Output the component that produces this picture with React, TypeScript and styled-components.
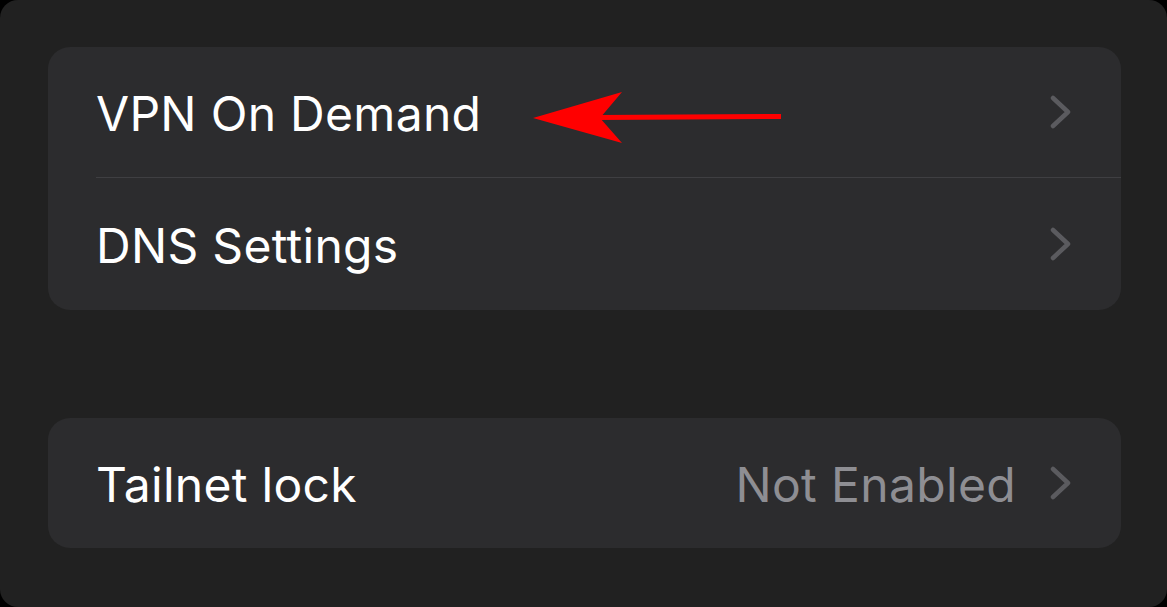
import React from "react";
import styled, { createGlobalStyle } from "styled-components";

const Global = createGlobalStyle`
  html, body { margin: 0; padding: 0; background: #000; }
  body { font-family: Inter, "Noto Sans", "Liberation Sans", sans-serif; }
`;

const Page = styled.div`
  width: 1167px;
  height: 607px;
  background: #000;
`;

const Panel = styled.div`
  box-sizing: border-box;
  width: 100%;
  height: 100%;
  background: #212121;
  border-radius: 18px;
  padding: 47px 46px 0 48px;
  display: flex;
  flex-direction: column;
  gap: 108px;
`;

const Card = styled.div`
  background: #2c2c2e;
  border-radius: 22px;
  overflow: hidden;
`;

const Row = styled.div<{ $h: number }>`
  position: relative;
  padding-left: 48px;
  height: ${(p) => p.$h}px;
  display: flex;
`;

const RowInner = styled.div<{ $sep?: boolean }>`
  flex: 1;
  display: flex;
  align-items: center;
  padding-right: 49px;
  border-bottom: ${(p) => (p.$sep ? "1px solid #3f3f42" : "none")};
`;

const Label = styled.span`
  flex: 1;
  color: #ffffff;
  font-size: 48px;
  letter-spacing: 0.3px;
  line-height: 1;
  padding-top: 3px;
`;

const Value = styled.span`
  color: #8e8e93;
  font-size: 48px;
  letter-spacing: 0.35px;
  line-height: 1;
  padding-top: 3px;
  margin-right: 34px;
`;

const ArrowSvg = styled.svg`
  position: absolute;
  left: 482px;
  top: 38px;
`;

const Chevron = () => (
  <svg width="22" height="34" viewBox="0 0 22 34" fill="none">
    <path
      d="M3 3 L18 17 L3 31"
      stroke="#5b5b5f"
      strokeWidth="4.5"
      strokeLinecap="round"
      strokeLinejoin="round"
    />
  </svg>
);

const Arrow = () => (
  <ArrowSvg width="260" height="65" viewBox="0 0 260 65">
    <line x1="68" y1="32.5" x2="251" y2="31.5" stroke="#ff0000" strokeWidth="5" />
    <path d="M3 33 L92 7 L70 33 L92 58 Z" fill="#ff0000" />
  </ArrowSvg>
);

export default function App() {
  return (
    <Page>
      <Global />
      <Panel>
        <Card>
          <Row $h={131}>
            <RowInner $sep>
              <Label>VPN On Demand</Label>
              <Chevron />
            </RowInner>
            <Arrow />
          </Row>
          <Row $h={132}>
            <RowInner>
              <Label>DNS Settings</Label>
              <Chevron />
            </RowInner>
          </Row>
        </Card>
        <Card>
          <Row $h={130}>
            <RowInner>
              <Label>Tailnet lock</Label>
              <Value>Not Enabled</Value>
              <Chevron />
            </RowInner>
          </Row>
        </Card>
      </Panel>
    </Page>
  );
}
